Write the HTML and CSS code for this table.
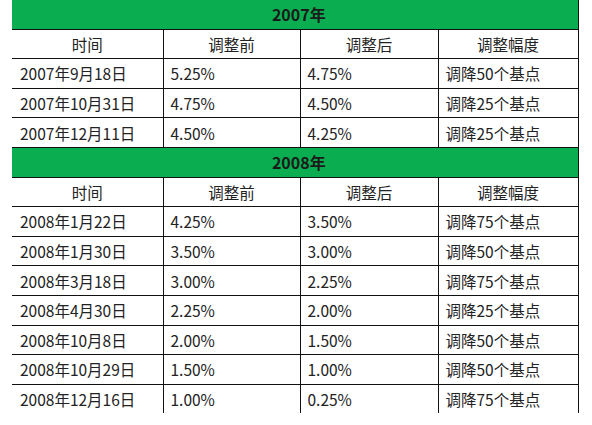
FILE: index.html
```html
<!DOCTYPE html>
<html lang="zh-CN">
<head>
  <meta charset="UTF-8" />
  <title>2007-2008年利率调整</title>
  <link rel="stylesheet" href="styles.css">
</head>
<body>

  <table class="rate-table">
    <colgroup>
      <col class="col-date">
      <col class="col-before">
      <col class="col-after">
      <col class="col-range">
    </colgroup>

    <!-- 2007 -->
    <tr class="year-row"><td colspan="4">2007年</td></tr>
    <tr class="head-row">
      <td>时间</td><td>调整前</td><td>调整后</td><td>调整幅度</td>
    </tr>
    <tr><td>2007年9月18日</td><td>5.25%</td><td>4.75%</td><td>调降50个基点</td></tr>
    <tr><td>2007年10月31日</td><td>4.75%</td><td>4.50%</td><td>调降25个基点</td></tr>
    <tr><td>2007年12月11日</td><td>4.50%</td><td>4.25%</td><td>调降25个基点</td></tr>

    <!-- 2008 -->
    <tr class="year-row"><td colspan="4">2008年</td></tr>
    <tr class="head-row">
      <td>时间</td><td>调整前</td><td>调整后</td><td>调整幅度</td>
    </tr>
    <tr><td>2008年1月22日</td><td>4.25%</td><td>3.50%</td><td>调降75个基点</td></tr>
    <tr><td>2008年1月30日</td><td>3.50%</td><td>3.00%</td><td>调降50个基点</td></tr>
    <tr><td>2008年3月18日</td><td>3.00%</td><td>2.25%</td><td>调降75个基点</td></tr>
    <tr><td>2008年4月30日</td><td>2.25%</td><td>2.00%</td><td>调降25个基点</td></tr>
    <tr><td>2008年10月8日</td><td>2.00%</td><td>1.50%</td><td>调降50个基点</td></tr>
    <tr><td>2008年10月29日</td><td>1.50%</td><td>1.00%</td><td>调降50个基点</td></tr>
    <tr class="last-row"><td>2008年12月16日</td><td>1.00%</td><td>0.25%</td><td>调降75个基点</td></tr>
  </table>

</body>
</html>
```

FILE: styles.css
```css
body {
  margin: 0;
  padding: 0 0 0 12px;
  background-color: #fff;
  font-family: "Noto Sans CJK SC", "Noto Sans", sans-serif;
  color: #222;
}

/* Table */
.rate-table {
  border-collapse: collapse;
  table-layout: fixed;
  width: 566px;
  font-size: 15.5px;
}
.col-date { width: 151px; }
.col-before { width: 137px; }
.col-after { width: 138px; }
.col-range { width: 140px; }

.rate-table td {
  height: 28.6px;
  padding: 0 0 0 7px;
  border-right: 1px solid #111;
  border-bottom: 1px solid #111;
  line-height: 18px;
  white-space: nowrap;
}
.rate-table td:first-child {
  padding-left: 8px;
}
.rate-table .last-row td {
  border-bottom: none;
}

/* Year title */
.year-row td {
  background-color: #0aae51;
  text-align: center;
  font-size: 16px;
  font-weight: bold;
  color: #1a1a1a;
  padding: 0;
}

/* Column headings */
.head-row td {
  text-align: center;
  padding: 0;
}
.head-row td:first-child {
  padding: 0;
}
```
